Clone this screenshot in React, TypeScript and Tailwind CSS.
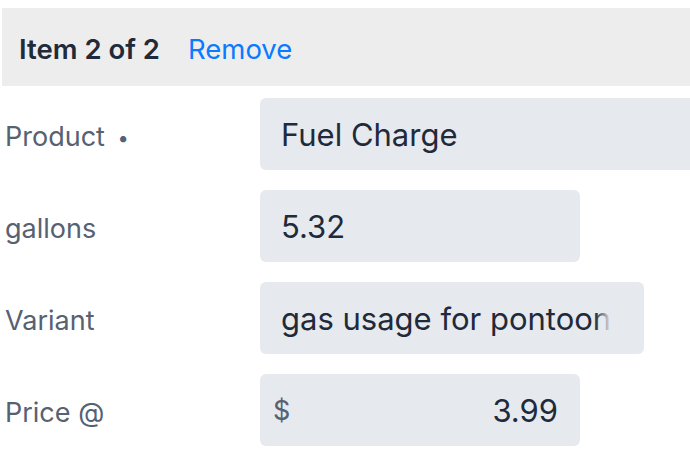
import React from "react";

function Label({ children }: { children: React.ReactNode }) {
  return (
    <div className="w-[258px] shrink-0 pl-[3px] pt-[4px] text-[27px] leading-none text-[#566172]">
      {children}
    </div>
  );
}

export default function App() {
  return (
    <div
      className="w-[690px] h-[466px] overflow-hidden bg-white pt-[8px] pl-[2px]"
      style={{ fontFamily: "Inter, 'Noto Sans', sans-serif" }}
    >
      <div className="h-[78px] bg-[#ededed] flex items-center pl-[17px] pt-[5px] gap-[28px]">
        <span className="text-[27.5px] font-semibold text-[#1f2a3a] leading-none">Item 2 of 2</span>
        <span className="text-[27.5px] text-[#0a7aff] leading-none">Remove</span>
      </div>
      <div className="mt-[12px] flex flex-col gap-[20px]">
        <div className="flex items-center">
          <Label>
            Product <span className="ml-[5px] text-[20px] align-middle">•</span>
          </Label>
          <div className="h-[72px] w-[440px] shrink-0 rounded-[6px] bg-[#e6e9ee] flex items-center pl-[21px] pt-[2px] text-[31px] text-[#1f2a3a]">
            Fuel Charge
          </div>
        </div>
        <div className="flex items-center">
          <Label>gallons</Label>
          <div className="h-[72px] w-[320px] shrink-0 rounded-[6px] bg-[#e6e9ee] flex items-center pl-[21px] pt-[2px] text-[31px] text-[#1f2a3a]">
            5.32
          </div>
        </div>
        <div className="flex items-center">
          <Label>Variant</Label>
          <div className="relative h-[72px] w-[384px] shrink-0 rounded-[6px] bg-[#e6e9ee] flex items-center pl-[21px] pt-[2px] text-[31px] text-[#1f2a3a] overflow-hidden whitespace-nowrap">
            <span className="relative">
              gas usage for pontoon
              <span className="absolute right-0 top-0 bottom-0 w-[16px] bg-gradient-to-r from-[#e6e9ee00] to-[#e6e9ee]" />
            </span>
          </div>
        </div>
        <div className="flex items-center">
          <Label>Price @</Label>
          <div className="h-[72px] w-[320px] shrink-0 rounded-[6px] bg-[#e6e9ee] flex items-center justify-between pl-[13px] pr-[22px] pt-[2px] text-[31px] text-[#1f2a3a]">
            <span className="text-[27px] text-[#566172]">$</span>
            <span>3.99</span>
          </div>
        </div>
      </div>
    </div>
  );
}
